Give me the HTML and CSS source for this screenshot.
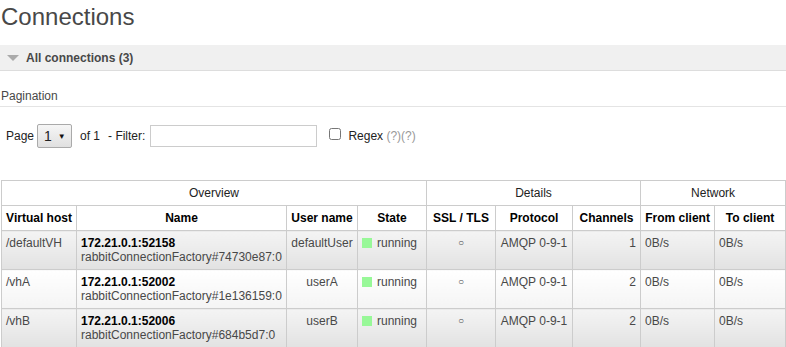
FILE: index.html
```html
<!DOCTYPE html>
<html lang="en">
<head>
    <meta charset="UTF-8">
    <title>Connections</title>
    <link rel="stylesheet" href="styles.css">
</head>
<body>
    <h1>Connections</h1>

    <div class="section">
        <h2><span class="arrow"></span>All connections (3)</h2>
    </div>

    <div class="pagination">
        <h3>Pagination</h3>
        <div class="filter-row">
            <label>Page</label>
            <span class="page-select">1 <span class="caret">&#9660;</span></span>
            <label class="of">of 1</label>
            <label>- Filter:</label>
            <input type="text" class="filter">
            <input type="checkbox" class="regex-box">
            <label class="regex">Regex <span class="help">(?)(?)</span></label>
        </div>
    </div>

    <table class="list">
        <colgroup>
            <col style="width:75px"><col style="width:210px"><col style="width:71px">
            <col style="width:69px"><col style="width:69px"><col style="width:77px">
            <col style="width:68px"><col style="width:74px"><col style="width:71px">
        </colgroup>
        <thead>
            <tr class="group">
                <th colspan="4">Overview</th>
                <th colspan="3">Details</th>
                <th colspan="2">Network</th>
            </tr>
            <tr class="cols">
                <th>Virtual host</th>
                <th>Name</th>
                <th>User name</th>
                <th>State</th>
                <th>SSL / TLS</th>
                <th>Protocol</th>
                <th>Channels</th>
                <th>From client</th>
                <th>To client</th>
            </tr>
        </thead>
        <tbody>
            <tr class="alt1">
                <td>/defaultVH</td>
                <td><b>172.21.0.1:52158</b><br>rabbitConnectionFactory#74730e87:0</td>
                <td class="c">defaultUser</td>
                <td><span class="state"></span>running</td>
                <td class="c ssl">&#9675;</td>
                <td class="c">AMQP 0-9-1</td>
                <td class="r">1</td>
                <td>0B/s</td>
                <td>0B/s</td>
            </tr>
            <tr class="alt2">
                <td>/vhA</td>
                <td><b>172.21.0.1:52002</b><br>rabbitConnectionFactory#1e136159:0</td>
                <td class="c">userA</td>
                <td><span class="state"></span>running</td>
                <td class="c ssl">&#9675;</td>
                <td class="c">AMQP 0-9-1</td>
                <td class="r">2</td>
                <td>0B/s</td>
                <td>0B/s</td>
            </tr>
            <tr class="alt1">
                <td>/vhB</td>
                <td><b>172.21.0.1:52006</b><br>rabbitConnectionFactory#684b5d7:0</td>
                <td class="c">userB</td>
                <td><span class="state"></span>running</td>
                <td class="c ssl">&#9675;</td>
                <td class="c">AMQP 0-9-1</td>
                <td class="r">2</td>
                <td>0B/s</td>
                <td>0B/s</td>
            </tr>
        </tbody>
    </table>
</body>
</html>
```

FILE: styles.css
```css
body {
    margin: 0;
    font-family: "Liberation Sans", Arial, sans-serif;
    font-size: 12px;
    color: #484848;
    background: #fff;
}
h1 {
    font-size: 24px;
    font-weight: normal;
    color: #484848;
    margin: 0;
    padding: 3px 0 0 1px;
    line-height: 28px;
}
.section {
    margin-top: 14px;
}
.section h2 {
    margin: 0;
    height: 25px;
    line-height: 26px;
    font-size: 12px;
    font-weight: bold;
    color: #484848;
    background: #f0f0f0;
    border-bottom: 1px solid #ddd;
    padding-left: 7px;
    display: flex;
    align-items: center;
}
.arrow {
    width: 0;
    height: 0;
    border-left: 6px solid transparent;
    border-right: 6px solid transparent;
    border-top: 6px solid #aaa;
    margin: 1px 7px 0 0;
}
.pagination h3 {
    margin: 18px 0 0;
    font-size: 12px;
    font-weight: normal;
    color: #484848;
    padding: 0 0 3px 1px;
    border-bottom: 1px solid #e4e4e4;
    line-height: 14px;
}
.filter-row {
    display: flex;
    align-items: center;
    padding: 17px 0 0 6px;
    color: #222;
    height: 24px;
}
.filter-row label {
    margin-right: 4px;
}
.filter-row label.of {
    margin-right: 8px;
}
.page-select {
    box-sizing: border-box;
    width: 35px;
    height: 24px;
    border: 1px solid #aaa;
    border-radius: 2px;
    background: linear-gradient(#f6f6f6, #e0e0e0);
    font-size: 14px;
    line-height: 22px;
    padding-left: 6px;
    margin: 0 8px 0 -1px;
    color: #222;
}
.caret {
    font-size: 8px;
    vertical-align: 2px;
    margin-left: 2px;
    color: #111;
}
.filter {
    box-sizing: border-box;
    width: 167px;
    height: 22px;
    border: 1px solid #ccc;
    margin: 0 12px 0 1px;
    padding: 0 4px;
}
.regex-box {
    width: 12px;
    height: 12px;
    margin: -4px 7px 0 0;
}
.help {
    color: #999;
}
table.list {
    margin: 32px 0 0 1px;
    border-collapse: collapse;
    table-layout: fixed;
    width: 784px;
}
table.list th,
table.list td {
    border: 1px solid #ccc;
    padding: 0 4px;
}
table.list th {
    font-weight: bold;
    color: #000;
    text-align: center;
    height: 24px;
}
tr.group th {
    font-weight: normal;
    color: #222;
}
tr.cols th {
    height: 24px;
}
table.list td {
    vertical-align: top;
    padding-top: 5px;
    height: 33px;
    line-height: 14px;
    white-space: nowrap;
    overflow: hidden;
    color: #484848;
}
table.list td b {
    color: #000;
}
tr.alt1 td {
    background: linear-gradient(#f4f4f4, #e2e2e2);
}
tr.alt2 td {
    background: linear-gradient(#fff, #f4f4f4);
}
td.c {
    text-align: center;
}
td.r {
    text-align: right;
}
td.ssl {
    font-size: 10px;
    color: #888;
}
.state {
    display: inline-block;
    width: 10px;
    height: 10px;
    background: #98f898;
    margin-right: 5px;
    vertical-align: -1px;
}
```
